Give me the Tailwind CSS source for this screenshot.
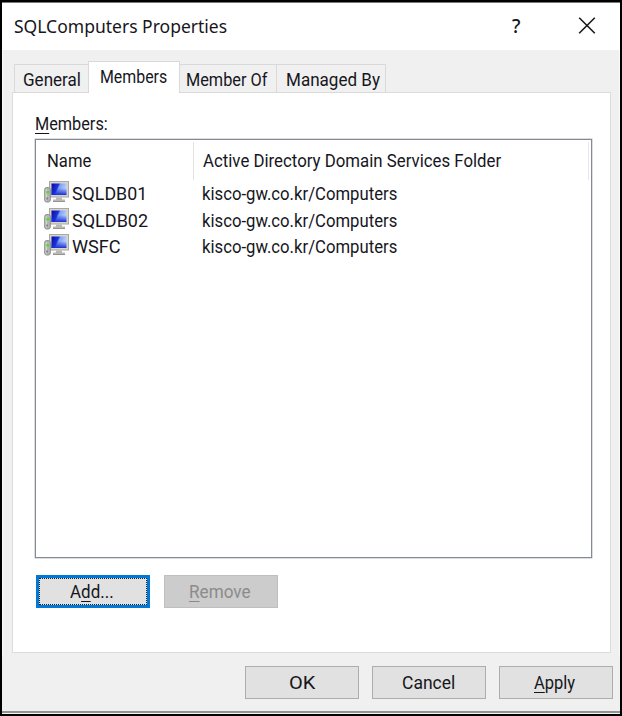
<!DOCTYPE html>
<html lang="en">
<head>
<meta charset="utf-8">
<title>SQLComputers Properties</title>
<script src="https://cdn.jsdelivr.net/npm/@tailwindcss/browser@4"></script>
</head>
<body class="w-[622px] h-[716px] overflow-hidden bg-black font-['Roboto','Liberation_Sans',sans-serif] text-[18.5px] leading-[22px] text-[#16161c]">
<svg class="absolute w-0 h-0">
  <defs>
    <linearGradient id="scr" x1="0" y1="0" x2="1" y2="0.35"><stop offset="0" stop-color="#0707a8"/><stop offset=".45" stop-color="#1c35d8"/><stop offset=".55" stop-color="#7da0f4"/><stop offset="1" stop-color="#b9d0ff"/></linearGradient>
    <linearGradient id="scr2" x1="0" y1="0" x2="0" y2="1"><stop offset=".4" stop-color="#1020c8" stop-opacity="0"/><stop offset="1" stop-color="#1830dc"/></linearGradient>
    <symbol id="pc" viewBox="0 0 26 22">
      <rect x="5.5" y=".5" width="19" height="15.5" fill="#d6d4cb" stroke="#aaa89f"/>
      <rect x="7.500" y="2.500" width="15" height="11.500" fill="url(#scr)"/>
      <rect x="7.500" y="2.500" width="15" height="11.500" fill="url(#scr2)"/>
      <path d="M12 16.5h6v2h3v2.500H9v-2.500h3z" fill="#b9b8b3"/>
      <path d="M9 20.500h12" stroke="#96958f"/>
      <rect x=".7" y="6.500" width="5.600" height="14.500" rx="2" fill="#b4b4b4" stroke="#8d8d8d"/>
      <path d="M2.200 8.500v11" stroke="#e2e2e2"/>
      <rect x="2.300" y="10" width="3" height="2.500" fill="#50e020"/>
      <path d="M3 16.500v2" stroke="#555"/>
    </symbol>
  </defs>
</svg>
<div class="ml-[2px] mt-[2px] w-[618px] h-[712px] flex flex-col bg-[#f0f0f0] border-t border-t-[#777]">
  <header class="h-[47px] shrink-0 bg-white flex items-start pl-[12px] pt-[12px] font-['Noto_Sans','Open_Sans',sans-serif] text-[18px]">
    <div class="w-[213px] whitespace-nowrap"><span data-w="213" class="inline-block origin-left">SQLComputers Properties</span></div>
    <div class="ml-[285px] w-[9px] whitespace-nowrap font-medium text-[19px]"><span data-w="9" class="inline-block origin-left">?</span></div>
    <svg class="ml-[57px] mt-[2px] w-[18px] h-[17px]" viewBox="0 0 18 17"><path d="M1.200 .7 16.800 16.300M16.800 .7 1.200 16.300" stroke="#1b1b1b" stroke-width="1.600" fill="none"/></svg>
  </header>
  <main class="h-[607px] shrink-0 border-l border-r border-l-[#fafafa] border-r-[#fafafa] px-[9px] pt-[11px]">
    <nav class="relative z-10 flex items-end h-[32px] ml-[2px] -mb-[1px]">
      <div class="w-[74px] h-[29px] border border-r-0 border-[#d9d9d9] pl-[8px] pt-[4px] whitespace-nowrap"><span data-w="58" class="inline-block origin-left">General</span></div>
      <div class="w-[92px] h-[32px] border border-b-0 border-[#d9d9d9] bg-white pl-[11px] pt-[4px] whitespace-nowrap"><span data-w="67" class="inline-block origin-left">Members</span></div>
      <div class="w-[97px] h-[29px] border border-l-0 border-[#d9d9d9] pl-[6px] pt-[4px] whitespace-nowrap"><span data-w="81" class="inline-block origin-left">Member Of</span></div>
      <div class="w-[109px] h-[29px] border border-l-0 border-[#d9d9d9] pl-[9px] pt-[4px] whitespace-nowrap"><span data-w="94" class="inline-block origin-left">Managed By</span></div>
    </nav>
    <section class="w-[599px] h-[561px] bg-white border border-[#dcdcdc] pl-[22px] pt-[20px]">
      <div class="whitespace-nowrap h-[26px]"><span data-w="73" class="inline-block origin-left"><span class="underline underline-offset-[3px] decoration-1">M</span>embers:</span></div>
      <div class="w-[557px] h-[419px] border border-[#858993] shadow-[0_0_0_0.500px_#b8bbc2]">
        <div class="flex h-[41px]">
          <div class="w-[158px] h-[38px] mt-[2px] border-r border-[#e2e2e2] pl-[11px] pt-[8px] whitespace-nowrap"><span data-w="44" class="inline-block origin-left">Name</span></div>
          <div class="w-[395px] h-[38px] mt-[2px] border-r border-[#e8e8e8] pl-[9px] pt-[8px] whitespace-nowrap"><span data-w="298" class="inline-block origin-left">Active Directory Domain Services Folder</span></div>
        </div>
        <div class="flex h-[26.500px] pl-[8px] whitespace-nowrap"><svg class="w-[26px] h-[22px]"><use href="#pc"/></svg><div class="w-[132px] pt-[2px] pl-[2px]"><span data-w="75" class="inline-block origin-left">SQLDB01</span></div><div class="pt-[2px]"><span data-w="195" class="inline-block origin-left">kisco-gw.co.kr/Computers</span></div></div>
        <div class="flex h-[26.500px] pl-[8px] whitespace-nowrap"><svg class="w-[26px] h-[22px]"><use href="#pc"/></svg><div class="w-[132px] pt-[2px] pl-[2px]"><span data-w="76" class="inline-block origin-left">SQLDB02</span></div><div class="pt-[2px]"><span data-w="195" class="inline-block origin-left">kisco-gw.co.kr/Computers</span></div></div>
        <div class="flex h-[26.500px] pl-[8px] whitespace-nowrap"><svg class="w-[26px] h-[22px]"><use href="#pc"/></svg><div class="w-[132px] pt-[2px] pl-[2px]"><span data-w="49" class="inline-block origin-left">WSFC</span></div><div class="pt-[2px]"><span data-w="195" class="inline-block origin-left">kisco-gw.co.kr/Computers</span></div></div>
      </div>
      <div class="flex gap-[14px] mt-[17px] ml-[1px]">
        <button class="w-[114px] h-[33px] bg-[#e1e1e1] border-[3px] border-[#0078d7]"><div class="h-full border border-dotted border-[#222] pl-[30px] pt-[2px] text-left whitespace-nowrap"><span data-w="44" class="inline-block origin-left">A<span class="underline underline-offset-[3px] decoration-1">d</span>d...</span></div></button>
        <button class="w-[114px] h-[33px] bg-[#ccc] border border-[#bfbfbf] text-[#8b8b8b] pl-[24px] pt-px text-left whitespace-nowrap"><span data-w="62" class="inline-block origin-left"><span class="underline underline-offset-[3px] decoration-1">R</span>emove</span></button>
      </div>
    </section>
  </main>
  <footer class="h-[45px] shrink-0 flex items-start gap-[13px] pl-[243px] pt-[9px]">
    <button class="w-[114px] h-[33px] bg-[#e1e1e1] border border-[#adadad] pl-[43px] pt-px text-left whitespace-nowrap"><span data-w="26" class="inline-block origin-left">OK</span></button>
    <button class="w-[114px] h-[33px] bg-[#e1e1e1] border border-[#adadad] pl-[29px] pt-px text-left whitespace-nowrap"><span data-w="53" class="inline-block origin-left">Cancel</span></button>
    <button class="w-[114px] h-[33px] bg-[#e1e1e1] border border-[#adadad] pl-[34px] pt-px text-left whitespace-nowrap"><span data-w="41" class="inline-block origin-left"><span class="underline underline-offset-[3px] decoration-1">A</span>pply</span></button>
  </footer>
  <div class="h-[12px] shrink-0 bg-[#f0f0f0] flex flex-col justify-end"><div class="h-[2px] bg-[#929292]"></div><div class="h-[1px] bg-[#f4f4f4]"></div></div>
</div>
<script>
function fit(el) {
  el.style.transform = 'scaleX(' + (el.dataset.w / el.offsetWidth) + ')';
}
var observer = new ResizeObserver(function (entries) {
  entries.forEach(function (e) { fit(e.target); });
});
document.querySelectorAll('[data-w]').forEach(function (el) { observer.observe(el); });
window.addEventListener('load', function () {
  document.querySelectorAll('[data-w]').forEach(fit);
});
</script>
</body>
</html>
